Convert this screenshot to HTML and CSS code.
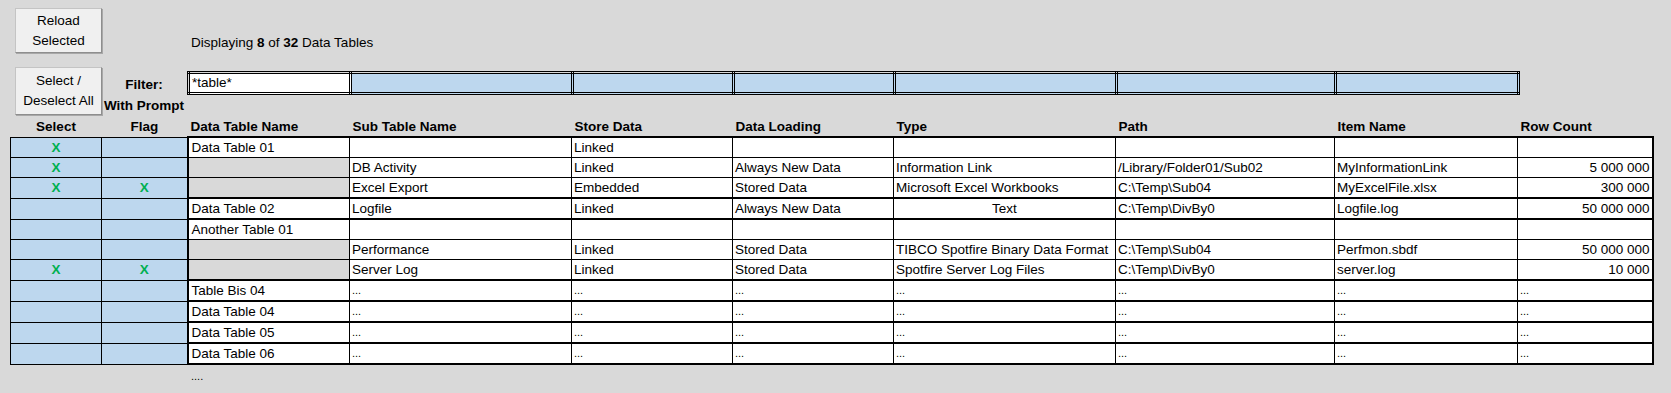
FILE: index.html
```html
<!DOCTYPE html>
<html>
<head>
<meta charset="utf-8">
<link rel="stylesheet" href="styles.css">
</head>
<body>
<div class="sheet">
  <div class="row-top">
    <div class="col-a"><div class="btn btn-reload">Reload<br>Selected</div></div>
    <div class="col-b"></div>
    <div class="status">Displaying <b>8</b> of <b>32</b> Data Tables</div>
  </div>
  <div class="row-filter">
    <div class="col-a"><div class="btn btn-select">Select /<br>Deselect All</div></div>
    <div class="col-b labels">
      <div class="lbl">Filter:</div>
      <div class="lbl">With Prompt</div>
    </div>
    <table class="filter">
      <colgroup>
        <col class="w-dtn"><col class="w-sub"><col class="w-store"><col class="w-load"><col class="w-type"><col class="w-path"><col class="w-item">
      </colgroup>
      <tr>
        <td class="f-input">*table*</td><td></td><td></td><td></td><td></td><td></td><td></td>
      </tr>
    </table>
  </div>
  <table class="grid">
    <colgroup>
      <col class="w-sel"><col class="w-flag"><col class="w-dtn"><col class="w-sub"><col class="w-store"><col class="w-load"><col class="w-type"><col class="w-path"><col class="w-item"><col class="w-count">
    </colgroup>
    <thead>
      <tr class="head">
        <th class="c">Select</th><th class="c">Flag</th><th>Data Table Name</th><th>Sub Table Name</th><th>Store Data</th><th>Data Loading</th><th>Type</th><th>Path</th><th>Item Name</th><th>Row Count</th>
      </tr>
    </thead>
    <tbody>
      <tr class="grp">
        <td class="sel x">X</td><td class="sel"></td><td class="dtn">Data Table 01</td><td></td><td>Linked</td><td></td><td></td><td></td><td></td><td class="last"></td>
      </tr>
      <tr>
        <td class="sel x">X</td><td class="sel"></td><td class="dtn gray"></td><td>DB Activity</td><td>Linked</td><td>Always New Data</td><td>Information Link</td><td>/Library/Folder01/Sub02</td><td>MyInformationLink</td><td class="last num">5 000 000</td>
      </tr>
      <tr>
        <td class="sel x">X</td><td class="sel x">X</td><td class="dtn gray"></td><td>Excel Export</td><td>Embedded</td><td>Stored Data</td><td>Microsoft Excel Workbooks</td><td>C:\Temp\Sub04</td><td>MyExcelFile.xlsx</td><td class="last num">300 000</td>
      </tr>
      <tr class="grp">
        <td class="sel"></td><td class="sel"></td><td class="dtn">Data Table 02</td><td>Logfile</td><td>Linked</td><td>Always New Data</td><td class="c">Text</td><td>C:\Temp\DivBy0</td><td>Logfile.log</td><td class="last num">50 000 000</td>
      </tr>
      <tr class="grp">
        <td class="sel"></td><td class="sel"></td><td class="dtn">Another Table 01</td><td></td><td></td><td></td><td></td><td></td><td></td><td class="last"></td>
      </tr>
      <tr>
        <td class="sel"></td><td class="sel"></td><td class="dtn gray"></td><td>Performance</td><td>Linked</td><td>Stored Data</td><td>TIBCO Spotfire Binary Data Format</td><td>C:\Temp\Sub04</td><td>Perfmon.sbdf</td><td class="last num">50 000 000</td>
      </tr>
      <tr>
        <td class="sel x">X</td><td class="sel x">X</td><td class="dtn gray"></td><td>Server Log</td><td>Linked</td><td>Stored Data</td><td>Spotfire Server Log Files</td><td>C:\Temp\DivBy0</td><td>server.log</td><td class="last num">10 000</td>
      </tr>
      <tr class="grp">
        <td class="sel"></td><td class="sel"></td><td class="dtn">Table Bis 04</td><td class="dots">...</td><td class="dots">...</td><td class="dots">...</td><td class="dots">...</td><td class="dots">...</td><td class="dots">...</td><td class="last dots">...</td>
      </tr>
      <tr class="grp">
        <td class="sel"></td><td class="sel"></td><td class="dtn">Data Table 04</td><td class="dots">...</td><td class="dots">...</td><td class="dots">...</td><td class="dots">...</td><td class="dots">...</td><td class="dots">...</td><td class="last dots">...</td>
      </tr>
      <tr class="grp">
        <td class="sel"></td><td class="sel"></td><td class="dtn">Data Table 05</td><td class="dots">...</td><td class="dots">...</td><td class="dots">...</td><td class="dots">...</td><td class="dots">...</td><td class="dots">...</td><td class="last dots">...</td>
      </tr>
      <tr class="grp end">
        <td class="sel"></td><td class="sel"></td><td class="dtn">Data Table 06</td><td class="dots">...</td><td class="dots">...</td><td class="dots">...</td><td class="dots">...</td><td class="dots">...</td><td class="dots">...</td><td class="last dots">...</td>
      </tr>
    </tbody>
  </table>
  <div class="more">....</div>
</div>
</body>
</html>
```

FILE: styles.css
```css
html, body {
  margin: 0;
  padding: 0;
  background: #d9d9d9;
}
body {
  font-family: "Liberation Sans", Arial, sans-serif;
  font-size: 13.5px;
  color: #000;
}
.sheet {
  padding: 8px 0 0 10px;
}
.row-top {
  display: flex;
  height: 59px;
}
.col-a {
  width: 91px;
  flex: none;
}
.col-b {
  width: 86px;
  flex: none;
}
.btn {
  margin-left: 5px;
  width: 87px;
  box-sizing: border-box;
  background: #f0f0f0;
  border: 1px solid #c4c4c4;
  border-right-color: #8e8e8e;
  border-bottom-color: #8e8e8e;
  box-shadow: 1px 1px 0 #a8a8a8;
  display: flex;
  align-items: center;
  justify-content: center;
  text-align: center;
  line-height: 20px;
  font-size: 13.5px;
}
.btn-reload {
  height: 45px;
}
.btn-select {
  height: 48px;
}
.status {
  padding: 26px 0 0 4px;
  line-height: 18px;
}
.row-filter {
  display: flex;
  height: 50px;
}
.labels {
  padding-top: 8px;
  display: flex;
  flex-direction: column;
  gap: 1px;
}
.lbl {
  font-weight: bold;
  text-align: center;
  line-height: 20px;
  white-space: nowrap;
}
.filter {
  margin-top: 4px;
  border-collapse: collapse;
  table-layout: fixed;
  width: 1330px;
  height: 24px;
}
.filter td {
  border: 3px double #000;
  background: #bdd7ee;
  padding: 0 2px;
  height: 18px;
  line-height: 18px;
}
.filter td.f-input {
  background: #fff;
}
.w-sel { width: 91px; }
.w-flag { width: 86px; }
.w-dtn { width: 162px; }
.w-sub { width: 222px; }
.w-store { width: 161px; }
.w-load { width: 161px; }
.w-type { width: 222px; }
.w-path { width: 219px; }
.w-item { width: 183px; }
.w-count { width: 135px; }
.grid {
  border-collapse: collapse;
  table-layout: fixed;
  width: 1642px;
}
.grid th {
  font-weight: bold;
  text-align: left;
  padding: 0 3px;
  height: 19px;
  line-height: 19px;
  white-space: nowrap;
}
.grid th.c {
  text-align: center;
}
.grid td {
  border: 1px solid #000;
  background: #fff;
  padding: 0 2px;
  height: 19px;
  line-height: 19px;
  white-space: nowrap;
  overflow: hidden;
}
.grid tr.grp td {
  border-top: 2px solid #000;
}
.grid tr.end td {
  border-bottom: 2px solid #000;
}
.grid td.sel {
  background: #bdd7ee;
  text-align: center;
}
.grid tr.grp td.sel,
.grid tr.end td.sel {
  border-top: 1px solid #000;
  border-bottom: 1px solid #000;
}
.grid td.x {
  color: #00b050;
  font-weight: bold;
}
.grid td.dtn {
  border-left: 2px solid #000;
  padding-left: 3px;
}
.grid td.gray {
  background: #d9d9d9;
}
.grid td.last {
  border-right: 2px solid #000;
}
.grid td.num {
  text-align: right;
}
.grid td.c {
  text-align: center;
}
.grid td.dots {
  font-size: 11px;
  vertical-align: bottom;
}
.more {
  padding: 4px 0 0 181px;
  font-size: 11px;
  line-height: 14px;
}
```
